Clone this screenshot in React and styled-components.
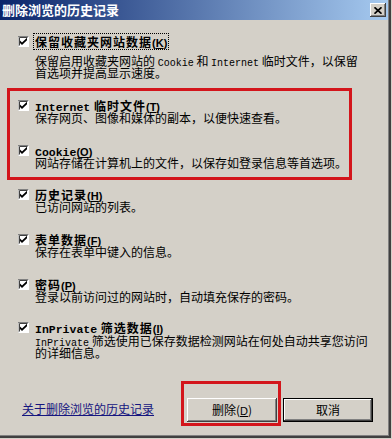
import React from 'react';
import styled, { createGlobalStyle } from 'styled-components';

const Global = createGlobalStyle`
  html, body { margin: 0; padding: 0; background: #d4d0c8; }
  body {
    width: 392px; height: 439px; overflow: hidden;
    font-family: "Noto Sans CJK SC", sans-serif;
    color: #000;
  }
`;

const Window = styled.div`
  width: 391px;
  height: 438px;
  box-sizing: border-box;
  background: #d4d0c8;
  box-shadow: inset -2px -2px 0 #404040, inset -3px -3px 0 #808080;
  display: flex;
  flex-direction: column;
`;

const TitleBar = styled.div`
  height: 20px;
  flex: none;
  margin-right: 3px;
  background: linear-gradient(to right, #0a246a, #a6caf0);
  display: flex;
  align-items: center;
  justify-content: space-between;
  padding: 0 2px 0 2px;
`;

const Title = styled.span`
  color: #fff;
  font-size: 13px;
  font-weight: bold;
  line-height: 20px;
  font-family: "Noto Sans CJK SC", sans-serif;
`;

const CloseButton = styled.div`
  width: 16px;
  height: 14px;
  box-sizing: border-box;
  background: #d4d0c8;
  box-shadow: inset -1px -1px #404040, inset 1px 1px #fff, inset -2px -2px #808080;
  display: flex;
  align-items: center;
  justify-content: center;
`;

const Body = styled.div`
  padding-top: 15px;
  display: flex;
  flex-direction: column;
`;

const Item = styled.div`
  display: grid;
  grid-template-columns: 11px 1fr;
  column-gap: 6px;
  padding-left: ${p => p.$inset ?? 18}px;
  margin-top: ${p => p.$gap ?? 0}px;
`;

const CheckBox = styled.svg`
  width: 11px;
  height: 11px;
  align-self: center;
  display: block;
`;

const Label = styled.span`
  grid-column: 2;
  font-size: 12px;
  font-weight: bold;
  letter-spacing: 1px;
  line-height: 13px;
  height: 13px;
  white-space: nowrap;
  justify-self: start;
  outline: ${p => (p.$focused ? '1px dotted #000' : 'none')};
  outline-offset: 1px;
`;

const Desc = styled.div`
  grid-column: 2;
  font-size: 12px;
  line-height: 12px;
  white-space: nowrap;
  margin-top: ${p => p.$gap ?? 0}px;
`;

const Latin = styled.span`
  font-family: "Liberation Mono", monospace;
  font-size: ${p => p.$size ?? 10}px;
  letter-spacing: 0;
  line-height: 0;
`;

const Accel = styled.span`
  font-family: "Liberation Sans", sans-serif;
  font-size: 11px;
  letter-spacing: 0;
  line-height: 0;
  & u { text-decoration: underline; }
`;

const Group = styled.div`
  margin-top: 9px;
  margin-left: 7px;
  width: 345px;
  box-sizing: border-box;
  border: 3px solid #d3151b;
  padding: 8px 0 8px 0;
  display: flex;
  flex-direction: column;
`;

const Footer = styled.div`
  margin-top: 22px;
  display: flex;
  align-items: flex-end;
  padding: 0 18px 0 22px;
`;

const Link = styled.a`
  font-size: 12px;
  line-height: 14px;
  color: #15157f;
  text-decoration: underline;
  margin-bottom: 10px;
  cursor: pointer;
  white-space: nowrap;
`;

const Highlight = styled.div`
  margin-left: auto;
  border: 3px solid #d3151b;
  padding: 14px 1px 1px 3px;
  display: flex;
`;

const Button = styled.button`
  width: 90px;
  height: 24px;
  box-sizing: border-box;
  border: none;
  margin: 0 0 ${p => p.$mb ?? 0}px ${p => p.$ml ?? 0}px;
  background: #d4d0c8;
  font-family: "Noto Sans CJK SC", sans-serif;
  font-size: 12px;
  line-height: 14px;
  color: #000;
  padding: 0;
  box-shadow: ${p =>
    p.$default
      ? 'inset 0 0 0 1px #000, inset -2px -2px #404040, inset 2px 2px #fff, inset -3px -3px #808080'
      : 'inset -1px -1px #404040, inset 1px 1px #fff, inset -2px -2px #808080'};
  & u { font-family: "Liberation Sans", sans-serif; font-size: 11px; line-height: 0; }
`;

const Check = () => (
  <CheckBox viewBox="0 0 11 11">
    <rect x="0" y="0" width="11" height="11" fill="#fff" />
    <path d="M0 10.5V0.5H10.5" stroke="#808080" fill="none" strokeWidth="1" />
    <path d="M1.5 9.5V1.5H9.5" stroke="#404040" fill="none" strokeWidth="1" />
    <path d="M2 4.5 L4 6.5 L9 1.8 L9 4.3 L4 9 L2 7 Z" fill="#000" />
  </CheckBox>
);

const Key = ({ k }) => (
  <Accel>(<u>{k}</u>)</Accel>
);

const Option = ({ label, desc, focused, gap, inset, descGap }) => (
  <Item $gap={gap} $inset={inset}>
    <Check />
    <Label $focused={focused}>{label}</Label>
    <Desc $gap={descGap}>{desc}</Desc>
  </Item>
);

export default function App() {
  return (
    <>
      <Global />
      <Window>
        <TitleBar>
          <Title>删除浏览的历史记录</Title>
          <CloseButton>
            <svg width="8" height="7" viewBox="0 0 8 7">
              <path d="M0.5 0.3 L7.5 6.7 M7.5 0.3 L0.5 6.7" stroke="#000" strokeWidth="1.7" />
            </svg>
          </CloseButton>
        </TitleBar>
        <Body>
          <Option
            focused
            descGap={7}
            label={<>保留收藏夹网站数据<Key k="K" /></>}
            desc={
              <>
                保留启用收藏夹网站的 <Latin>Cookie</Latin> 和 <Latin>Internet</Latin> 临时文件，以保留
                <br />
                首选项并提高显示速度。
              </>
            }
          />
          <Group>
            <Option
              inset={8}
              label={<><Latin $size={11.5}>Internet</Latin> 临时文件<Key k="T" /></>}
              desc="保存网页、图像和媒体的副本，以便快速查看。"
            />
            <Option
              inset={8}
              gap={20}
              label={<><Latin $size={11.5}>Cookie</Latin><Key k="O" /></>}
              desc="网站存储在计算机上的文件，以保存如登录信息等首选项。"
            />
          </Group>
          <Option
            gap={8}
            label={<>历史记录<Key k="H" /></>}
            desc="已访问网站的列表。"
          />
          <Option
            gap={20}
            label={<>表单数据<Key k="F" /></>}
            desc="保存在表单中键入的信息。"
          />
          <Option
            gap={20}
            label={<>密码<Key k="P" /></>}
            desc="登录以前访问过的网站时，自动填充保存的密码。"
          />
          <Option
            gap={18}
            descGap={1}
            label={<><Latin $size={11.5}>InPrivate</Latin> 筛选数据<Key k="I" /></>}
            desc={
              <>
                <Latin>InPrivate</Latin> 筛选使用已保存数据检测网站在何处自动共享您访问
                <br />
                的详细信息。
              </>
            }
          />
        </Body>
        <Footer>
          <Link>关于删除浏览的历史记录</Link>
          <Highlight>
            <Button>删除(<u>D</u>)</Button>
          </Highlight>
          <Button $default $ml={2} $mb={4}>取消</Button>
        </Footer>
      </Window>
    </>
  );
}
